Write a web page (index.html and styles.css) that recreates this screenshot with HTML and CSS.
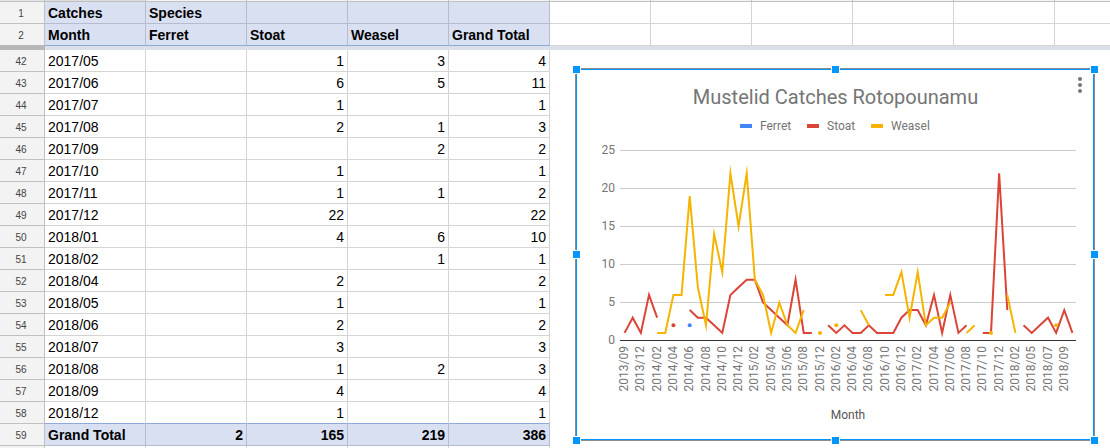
FILE: index.html
```
<!DOCTYPE html>
<html lang="en">
<head>
<meta charset="utf-8">
<title>Mustelid catches</title>
<link rel="stylesheet" href="styles.css">
</head>
<body>
<main class="sheet">
  <table class="grid frozen">
    <colgroup><col class="num-col"><col class="data-col"><col class="data-col"><col class="data-col"><col class="data-col"><col class="data-col"><col class="data-col"><col class="data-col"><col class="data-col"><col class="data-col"><col class="data-col"><col></colgroup>
    <thead>
      <tr class="letters"><td class="corner"></td><td class="active"></td><td></td><td></td><td></td><td></td><td></td><td></td><td></td><td></td><td></td><td></td></tr>
    </thead>
    <tbody>
      <tr><th class="num" scope="row">1</th><th class="head">Catches</th><th class="head">Species</th><th class="head"></th><th class="head"></th><th class="head"></th><td></td><td></td><td></td><td></td><td></td><td></td></tr>
      <tr class="last"><th class="num" scope="row">2</th><th class="head">Month</th><th class="head">Ferret</th><th class="head">Stoat</th><th class="head">Weasel</th><th class="head">Grand Total</th><td></td><td></td><td></td><td></td><td></td><td></td></tr>
    </tbody>
  </table>
  <div class="freeze-bar"></div>
  <div class="scroll-area">
    <table class="grid body-grid">
      <colgroup><col class="num-col"><col class="data-col"><col class="data-col"><col class="data-col"><col class="data-col"><col class="data-col"></colgroup>
      <tbody>
        <tr><th class="num" scope="row">42</th><td class="month">2017/05</td><td></td><td>1</td><td>3</td><td>4</td></tr>
        <tr><th class="num" scope="row">43</th><td class="month">2017/06</td><td></td><td>6</td><td>5</td><td>11</td></tr>
        <tr><th class="num" scope="row">44</th><td class="month">2017/07</td><td></td><td>1</td><td></td><td>1</td></tr>
        <tr><th class="num" scope="row">45</th><td class="month">2017/08</td><td></td><td>2</td><td>1</td><td>3</td></tr>
        <tr><th class="num" scope="row">46</th><td class="month">2017/09</td><td></td><td></td><td>2</td><td>2</td></tr>
        <tr><th class="num" scope="row">47</th><td class="month">2017/10</td><td></td><td>1</td><td></td><td>1</td></tr>
        <tr><th class="num" scope="row">48</th><td class="month">2017/11</td><td></td><td>1</td><td>1</td><td>2</td></tr>
        <tr><th class="num" scope="row">49</th><td class="month">2017/12</td><td></td><td>22</td><td></td><td>22</td></tr>
        <tr><th class="num" scope="row">50</th><td class="month">2018/01</td><td></td><td>4</td><td>6</td><td>10</td></tr>
        <tr><th class="num" scope="row">51</th><td class="month">2018/02</td><td></td><td></td><td>1</td><td>1</td></tr>
        <tr><th class="num" scope="row">52</th><td class="month">2018/04</td><td></td><td>2</td><td></td><td>2</td></tr>
        <tr><th class="num" scope="row">53</th><td class="month">2018/05</td><td></td><td>1</td><td></td><td>1</td></tr>
        <tr><th class="num" scope="row">54</th><td class="month">2018/06</td><td></td><td>2</td><td></td><td>2</td></tr>
        <tr><th class="num" scope="row">55</th><td class="month">2018/07</td><td></td><td>3</td><td></td><td>3</td></tr>
        <tr><th class="num" scope="row">56</th><td class="month">2018/08</td><td></td><td>1</td><td>2</td><td>3</td></tr>
        <tr><th class="num" scope="row">57</th><td class="month">2018/09</td><td></td><td>4</td><td></td><td>4</td></tr>
        <tr class="before-total"><th class="num" scope="row">58</th><td class="month">2018/12</td><td></td><td>1</td><td></td><td>1</td></tr>
        <tr class="total"><th class="num" scope="row">59</th><td class="month">Grand Total</td><td>2</td><td>165</td><td>219</td><td>386</td></tr>
        <tr class="next"><th class="num" scope="row"></th><td></td><td></td><td></td><td></td><td></td></tr>
      </tbody>
    </table>
    <div class="chart-pane">
      <section class="chart" aria-label="Mustelid Catches Rotopounamu">
        <div class="chart-inner">
          <svg id="plot" class="plot" viewBox="0 0 516 369" role="img" aria-label="Line chart of catches by month">
            <text class="title" x="258.5" y="34" text-anchor="middle">Mustelid Catches Rotopounamu</text>
            <rect class="fill-ferret" x="163" y="54" width="12" height="4"/>
            <text class="legend" x="183" y="60">Ferret</text>
            <rect class="fill-stoat" x="230" y="54" width="12" height="4"/>
            <text class="legend" x="250" y="60">Stoat</text>
            <rect class="fill-weasel" x="294" y="54" width="12" height="4"/>
            <text class="legend" x="314" y="60">Weasel</text>
            <text class="axis-title" x="271" y="349" text-anchor="middle">Month</text>
          </svg>
        </div>
        <button class="menu" type="button" aria-label="Chart options">
          <svg viewBox="0 0 6 18" width="6" height="18"><circle cx="3" cy="3" r="2"/><circle cx="3" cy="9" r="2"/><circle cx="3" cy="15" r="2"/></svg>
        </button>
        <i class="handle top left"></i><i class="handle top center"></i><i class="handle top right"></i>
        <i class="handle middle left"></i><i class="handle middle right"></i>
        <i class="handle bottom left"></i><i class="handle bottom center"></i><i class="handle bottom right"></i>
      </section>
    </div>
  </div>
</main>
<script src="chart.js"></script>
</body>
</html>
```
FILE: styles.css
```
* { box-sizing: border-box; }
body {
  margin: 0;
  background: #fff;
  color: #000;
  font: 14px/18px "Liberation Sans", Arial, sans-serif;
}
.sheet { height: 100vh; overflow: hidden; }

.grid {
  border-collapse: separate;
  border-spacing: 0;
  table-layout: fixed;
}
.frozen { width: 100%; }
.body-grid { width: 550px; flex: none; }
.num-col { width: 45px; }
.data-col { width: 101px; }
.grid td, .grid th {
  height: 22px;
  padding: 1px 3px 0;
  border-right: 1px solid #d4d4d4;
  border-bottom: 1px solid #d4d4d4;
  text-align: right;
  white-space: nowrap;
}
.frozen td:last-child { border-right: 0; }
.grid .num {
  padding: 2px 2px 0 0;
  background: #f3f3f3;
  border-color: #c0c0c0;
  color: #444;
  font-size: 10px;
  font-weight: normal;
  text-align: center;
}
.grid .head {
  background: #d9e0f2;
  border-color: #b5bcd0;
  text-align: left;
}
.grid .month { text-align: left; }
.grid .letters td {
  height: 2px;
  padding: 0;
  background: #f3f3f3;
  border-color: #c0c0c0;
}
.grid .letters .active { background: #ddd; }
.grid .letters .corner { background: #e4e4e4; }
.grid .last .head { border-bottom-color: #8ea9db; }
.grid .last .num { border-bottom-color: #b7b7b7; }
.freeze-bar {
  height: 4px;
  background: #dadfe8;
  border-left: 45px solid #b7b7b7;
}

.grid .before-total td { border-bottom-color: #8ea9db; }
.grid .total td {
  background: #d9e0f2;
  border-color: #b5bcd0;
  font-weight: bold;
}

.scroll-area { display: flex; }
.chart-pane { flex: 1; padding: 18px 15px 0 25px; }
.chart {
  position: relative;
  border: 1px solid #8c8c8c;
  background: #fff;
}
.chart-inner { border: 1px solid #0096fd; }
.plot { display: block; width: 100%; height: auto; font-family: Roboto, sans-serif; }
.title { font-size: 20px; fill: #757575; }
.legend, .tick { font-size: 12px; fill: #757575; }
.axis-title { font-size: 12px; fill: #555; }
.rule { stroke: #ccc; }
.baseline { stroke: #333; }
.line { fill: none; stroke-width: 2; stroke-miterlimit: 10; }
.line-stoat { stroke: #db4437; }
.line-weasel { stroke: #f4b400; }
.fill-ferret { fill: #4285f4; }
.fill-stoat { fill: #db4437; }
.fill-weasel { fill: #f4b400; }

.menu {
  position: absolute;
  top: 7px;
  right: 11px;
  padding: 0;
  border: 0;
  background: none;
  line-height: 0;
}
.menu svg { fill: #757575; }
.handle {
  position: absolute;
  width: 9px;
  height: 9px;
  border: 1px solid #fff;
  background: #0096fd;
}
.top { top: -4px; }
.middle { top: calc(50% - 5px); }
.bottom { bottom: -5px; }
.left { left: -4px; }
.center { left: calc(50% - 4px); }
.right { right: -5px; }
```
FILE: chart.js
```
const n = null;
const series = {
  ferret: [n, n, n, n, n, n, n, n, 2],
  stoat: [1, 3, 1, 6, 3, n, 2, n, 4, 3, 3, 2, 1, 6, 7, 8, 8, 5, 4, 3, 2, 8, 1, 1, n, 2, 1, 2, 1, 1, 2, 1, 1, 1, 3, 4, 4, 2, 6, 1, 6, 1, 2, n, 1, 1, 22, 4, n, 2, 1, 2, 3, 1, 4, 1],
  weasel: [n, n, n, n, 1, 1, 6, 6, 19, 7, 2, 14, 9, 22, 15, 22, 8, 6, 1, 5, 2, 1, 4, n, 1, n, 2, n, n, 4, 2, n, 6, 6, 9, 3, 9, 2, 3, 3, 5, n, 1, 2, n, 1, n, 6, 1, n, n, n, n, 2]
};
const months = ["2013/09", "2013/12", "2014/02", "2014/04", "2014/06", "2014/08", "2014/10", "2014/12", "2015/02", "2015/04", "2015/06", "2015/08", "2015/12", "2016/02", "2016/04", "2016/08", "2016/10", "2016/12", "2017/02", "2017/04", "2017/06", "2017/08", "2017/10", "2017/12", "2018/02", "2018/05", "2018/07", "2018/09"];

const plot = document.getElementById("plot");
const left = 43, right = 499, base = 270.5, unit = 7.6;
const step = (right - left) / 56;
const px = i => left + step * (i + 0.5) + 0.5;
const py = v => base - v * unit;

function add(tag, attrs, text) {
  const el = document.createElementNS("http://www.w3.org/2000/svg", tag);
  for (const k in attrs) el.setAttribute(k, attrs[k]);
  if (text !== undefined) el.textContent = text;
  plot.appendChild(el);
}

for (let v = 0; v <= 25; v += 5) {
  add("line", { class: v ? "rule" : "baseline", x1: left, x2: right, y1: py(v), y2: py(v) });
  add("text", { class: "tick", x: 38, y: py(v) + 3.5, "text-anchor": "end" }, v);
}
months.forEach((m, k) => {
  const x = px(k * 2) + 3.5;
  add("text", { class: "tick", transform: `translate(${x} 276) rotate(-90)`, "text-anchor": "end" }, m);
});
for (const name in series) {
  let run = [];
  [...series[name], n].forEach((v, i) => {
    if (v !== n) { run.push([px(i), py(v)]); return; }
    if (run.length === 1) add("circle", { class: "fill-" + name, cx: run[0][0], cy: run[0][1], r: 2 });
    if (run.length > 1) add("polyline", { class: "line line-" + name, points: run.join(" ") });
    run = [];
  });
}
```
